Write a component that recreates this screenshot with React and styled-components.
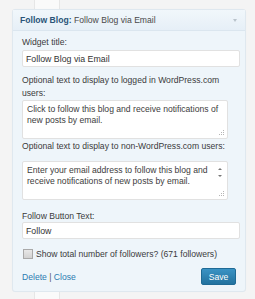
import styled, { createGlobalStyle } from 'styled-components';

const GlobalStyle = createGlobalStyle`
  html, body { margin: 0; padding: 0; }
  body {
    background: #f4f4f4;
    font-family: "Liberation Sans", Arial, sans-serif;
    width: 255px;
    height: 299px;
    overflow: hidden;
  }
`;

const Page = styled.div`
  display: flex;
  flex-direction: column;
  width: 255px;
  height: 299px;
`;

const Strip = styled.div`
  height: ${(p) => p.h}px;
  display: flex;
  flex-shrink: 0;
`;

const Cell = styled.div`
  margin-left: 34px;
  width: 24px;
  background: #fafafa;
  border-left: 1px solid #e6e6e6;
  border-right: 1px solid #e6e6e6;
`;

const Widget = styled.div`
  margin-left: 12px;
  width: 232px;
  flex-shrink: 0;
  border: 1px solid #dfe8ef;
  border-radius: 3px;
  background: #eef5fa;
  box-shadow: 0 0 1px rgba(0, 0, 0, 0.04);
`;

const Header = styled.div`
  height: 20px;
  display: flex;
  align-items: center;
  justify-content: space-between;
  padding: 0 8px 0 7px;
  border-bottom: 1px solid #dbe6ef;
  background: linear-gradient(#f1f7fb, #e6eff7);
  font-size: 8.6px;
  color: #4a4a4a;
`;

const Strong = styled.span`
  font-weight: bold;
  color: #2a5478;
`;

const Arrow = styled.span`
  width: 0;
  height: 0;
  border-left: 2.5px solid transparent;
  border-right: 2.5px solid transparent;
  border-top: 3px solid #b9c3cb;
`;

const Body = styled.div`
  padding: 5px 8px 6px 9px;
  display: flex;
  flex-direction: column;
`;

const Label = styled.div`
  font-size: 8.6px;
  line-height: 13px;
  color: #3a3a3a;
  margin-top: ${(p) => p.mt ?? 0}px;
`;

const Input = styled.div`
  margin-top: ${(p) => p.mt ?? 1}px;
  height: ${(p) => p.h ?? 15}px;
  width: 213px;
  background: #fff;
  border: 1px solid #e1e1e1;
  border-radius: 2px;
  display: flex;
  align-items: center;
  padding-left: 3px;
  box-sizing: content-box;
  font-size: 8.8px;
  color: #333;
`;

const Area = styled.div`
  margin-top: ${(p) => p.mt ?? 1}px;
  position: relative;
  height: ${(p) => p.h ?? 37}px;
  width: 204px;
  background: #fff;
  border: 1px solid #e1e1e1;
  border-radius: 2px;
  display: flex;
`;

const AreaText = styled.div`
  flex: 1;
  padding: 3px 4px 0 4px;
  font-size: 8.6px;
  line-height: 11px;
  color: #3c3c3c;
`;

const Scroll = styled.div`
  width: 9px;
  display: flex;
  flex-direction: column;
  align-items: center;
  padding-top: 6px;
  gap: 5px;
  margin-right: 3px;
`;

const Up = styled.span`
  width: 0;
  height: 0;
  border-left: 2px solid transparent;
  border-right: 2px solid transparent;
  border-bottom: 2px solid #777;
`;

const Down = styled(Up)`
  border-bottom: none;
  border-top: 2px solid #777;
`;

const Grip = styled.svg`
  position: absolute;
  right: 2px;
  bottom: 2px;
`;

const CheckRow = styled.div`
  display: flex;
  align-items: center;
  gap: 3px;
  height: 10px;
  margin-top: 10px;
  font-size: 8.6px;
  color: #3a3a3a;
`;

const Box = styled.span`
  width: 8px;
  height: 8px;
  border: 1px solid #a9a9a9;
  background: linear-gradient(#e8e8e8, #d2d2d2);
  margin-left: 1px;
`;

const Footer = styled.div`
  margin-top: 9px;
  display: flex;
  align-items: center;
  justify-content: space-between;
  font-size: 8.6px;
  color: #555;
`;

const Link = styled.span`
  color: #2b7bb0;
`;

const Save = styled.div`
  width: 35px;
  height: 17px;
  border-radius: 2px;
  background: linear-gradient(#3a93c4, #22729f);
  border: 1px solid #1f6a95;
  box-sizing: border-box;
  color: #fff;
  font-size: 8.6px;
  display: flex;
  align-items: center;
  justify-content: center;
  margin-right: 1px;
`;

const GripIcon = () => (
  <Grip width="6" height="6" viewBox="0 0 6 6">
    <g fill="#b5b5b5">
      <rect x="4" y="0" width="1" height="1" />
      <rect x="2" y="2" width="1" height="1" />
      <rect x="4" y="2" width="1" height="1" />
      <rect x="0" y="4" width="1" height="1" />
      <rect x="2" y="4" width="1" height="1" />
      <rect x="4" y="4" width="1" height="1" />
    </g>
  </Grip>
);

export default function App() {
  return (
    <Page>
      <GlobalStyle />
      <Strip h={9}>
        <Cell />
      </Strip>
      <Widget>
        <Header>
          <span>
            <Strong>Follow Blog:</Strong> Follow Blog via Email
          </span>
          <Arrow />
        </Header>
        <Body>
          <Label>Widget title:</Label>
          <Input>Follow Blog via Email</Input>
          <Label mt={7}>
            Optional text to display to logged in WordPress.com users:
          </Label>
          <Area mt={0} h={37}>
            <AreaText>
              Click to follow this blog and receive notifications of new posts by email.
            </AreaText>
            <GripIcon />
          </Area>
          <Label mt={1}>Optional text to display to non-WordPress.com users:</Label>
          <Area mt={8} h={37}>
            <AreaText>
              Enter your email address to follow this blog and receive notifications of new posts by email.
            </AreaText>
            <Scroll>
              <Up />
              <Down />
            </Scroll>
            <GripIcon />
          </Area>
          <Label mt={10}>Follow Button Text:</Label>
          <Input mt={-1}>Follow</Input>
          <CheckRow>
            <Box />
            Show total number of followers? (671 followers)
          </CheckRow>
          <Footer>
            <span>
              <Link>Delete</Link> | <Link>Close</Link>
            </span>
            <Save>Save</Save>
          </Footer>
        </Body>
      </Widget>
      <Strip h={7}>
        <Cell />
      </Strip>
    </Page>
  );
}
